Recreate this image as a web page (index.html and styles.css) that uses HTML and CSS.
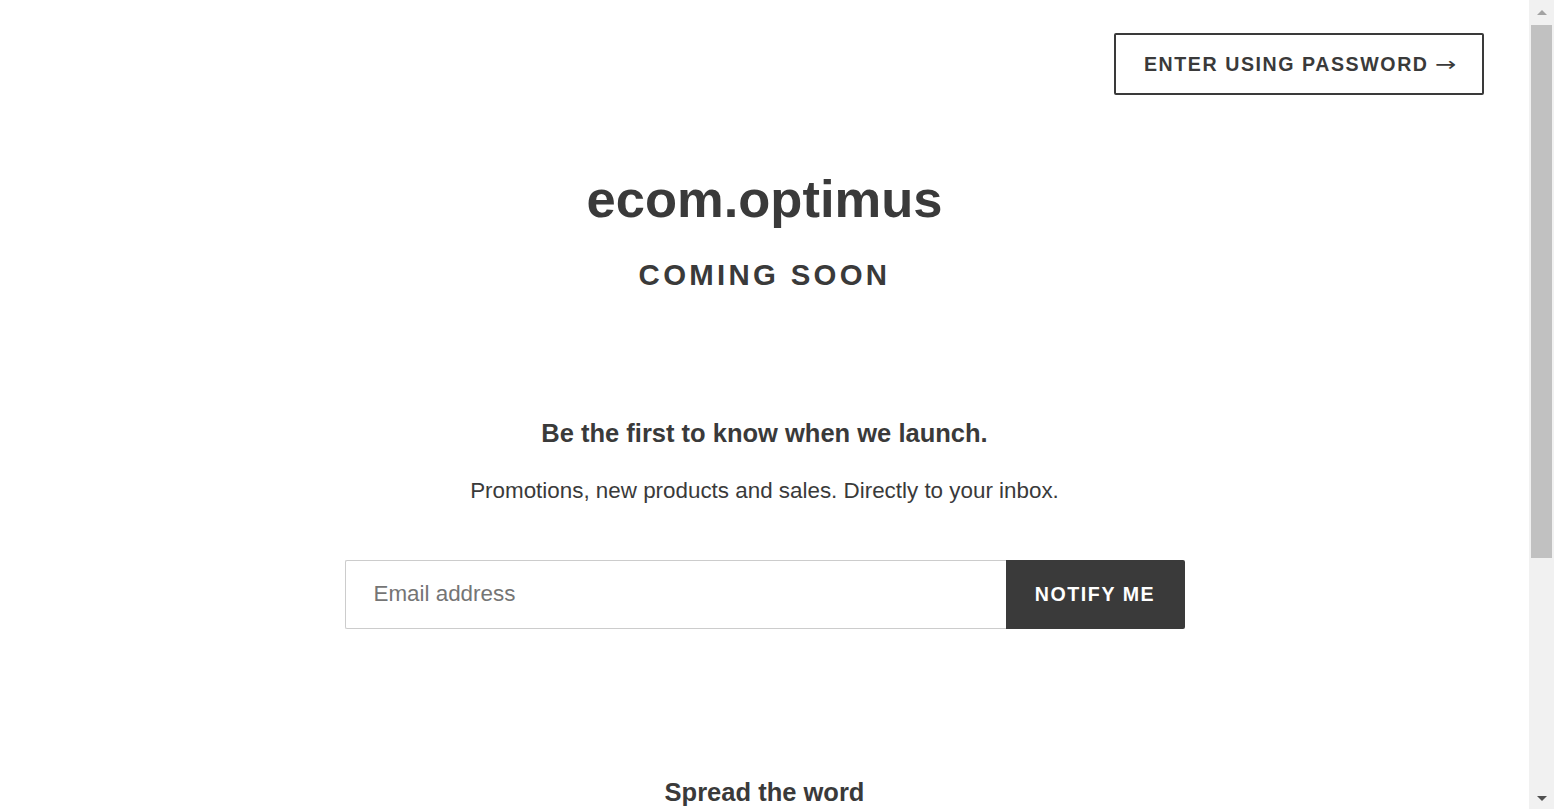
FILE: index.html
```html
<!DOCTYPE html>
<html lang="en">
<head>
<meta charset="utf-8">
<title>ecom.optimus</title>
<link rel="stylesheet" href="styles.css">
</head>
<body>
<div class="site">
  <header class="top-bar">
    <a class="login-btn" href="#login">Enter using password <span class="arrow">&rarr;</span></a>
  </header>
  <main class="page">
    <h1 class="store-name">ecom.optimus</h1>
    <h2 class="coming">Coming Soon</h2>

    <section class="signup">
      <h3 class="signup-title">Be the first to know when we launch.</h3>
      <p class="signup-text">Promotions, new products and sales. Directly to your inbox.</p>
      <form class="signup-form">
        <input class="email" type="email" placeholder="Email address">
        <button class="notify" type="button">Notify me</button>
      </form>
    </section>

    <section class="share">
      <h3 class="share-title">Spread the word</h3>
    </section>
  </main>
</div>
<div class="scrollbar" aria-hidden="true">
  <div class="sb-btn"><span class="tri-up"></span></div>
  <div class="sb-track">
    <div class="sb-thumb"></div>
  </div>
  <div class="sb-btn"><span class="tri-down"></span></div>
</div>
</body>
</html>
```

FILE: styles.css
```css
html {
  height: 100%;
  background: #ffffff;
}

body {
  display: flex;
  height: 100vh;
  overflow: hidden;
  margin: 0;
  font-family: "Liberation Sans", Arial, Helvetica, sans-serif;
  color: #3a3a3a;
  background: #ffffff;
}

.site {
  flex: 1;
  min-width: 0;
  overflow: hidden;
}

/* scrollbar */
.scrollbar {
  display: flex;
  flex-direction: column;
  flex: 0 0 25px;
  background: #f1f1f1;
}
.sb-btn {
  display: flex;
  align-items: center;
  justify-content: center;
  height: 25px;
  flex: 0 0 25px;
}
.tri-up {
  width: 0;
  height: 0;
  border-left: 5px solid transparent;
  border-right: 5px solid transparent;
  border-bottom: 5px solid #a3a3a3;
}
.tri-down {
  width: 0;
  height: 0;
  border-left: 5px solid transparent;
  border-right: 5px solid transparent;
  border-top: 5px solid #505050;
  margin-top: 3px;
}
.sb-track {
  flex: 1;
  padding: 0 2px;
}
.sb-thumb {
  height: 533px;
  background: #c1c1c1;
}

/* header */
.top-bar {
  display: flex;
  justify-content: flex-end;
  padding: 33px 45px 0 0;
}

.login-btn {
  display: flex;
  align-items: center;
  border: 2px solid #3a3a3a;
  border-radius: 2px;
  padding: 17.5px 27px 17.5px 28px;
  font-size: 19.6px;
  line-height: 23px;
  font-weight: 700;
  letter-spacing: 0.08em;
  text-transform: uppercase;
  color: #3a3a3a;
  text-decoration: none;
}
.login-btn .arrow {
  display: inline-block;
  margin-left: 6px;
  margin-right: 4px;
  font-family: "DejaVu Sans", sans-serif;
  font-weight: 400;
  font-size: 19.6px;
  letter-spacing: 0;
  transform: scaleX(1.3);
  transform-origin: left center;
}

/* main */
.page {
  display: flex;
  flex-direction: column;
  align-items: center;
  text-align: center;
}

.store-name {
  margin: 72px 0 0;
  font-size: 52.5px;
  line-height: 63px;
  font-weight: 700;
}

.coming {
  margin: 27px 0 0;
  font-size: 29.4px;
  line-height: 35px;
  font-weight: 700;
  letter-spacing: 0.112em;
  text-transform: uppercase;
}

.signup {
  display: flex;
  flex-direction: column;
  align-items: center;
  margin-top: 126px;
  width: 840px;
}

.signup-title {
  margin: 0;
  font-size: 25.5px;
  line-height: 30px;
  font-weight: 700;
}

.signup-text {
  margin: 26px 0 0;
  font-size: 22.4px;
  line-height: 33.6px;
}

.signup-form {
  display: flex;
  width: 100%;
  margin-top: 52px;
}

.email {
  flex: 1;
  box-sizing: border-box;
  height: 69px;
  margin: 0;
  border: 1px solid #cccccc;
  border-right: 0;
  border-radius: 2px 0 0 2px;
  padding: 0 28px;
  font-family: inherit;
  font-size: 22.4px;
  color: #3a3a3a;
  outline: none;
}
.email::placeholder {
  color: #757575;
}

.notify {
  box-sizing: border-box;
  width: 179px;
  height: 69px;
  margin: 0;
  border: 0;
  border-radius: 0 2px 2px 0;
  background: #3a3a3a;
  color: #ffffff;
  font-family: inherit;
  font-size: 19.6px;
  font-weight: 700;
  letter-spacing: 0.08em;
  text-transform: uppercase;
}

.share {
  display: flex;
  flex-direction: column;
  align-items: center;
  margin-top: 148px;
}

.share-title {
  margin: 0;
  font-size: 25.5px;
  line-height: 30px;
  font-weight: 700;
}
```
